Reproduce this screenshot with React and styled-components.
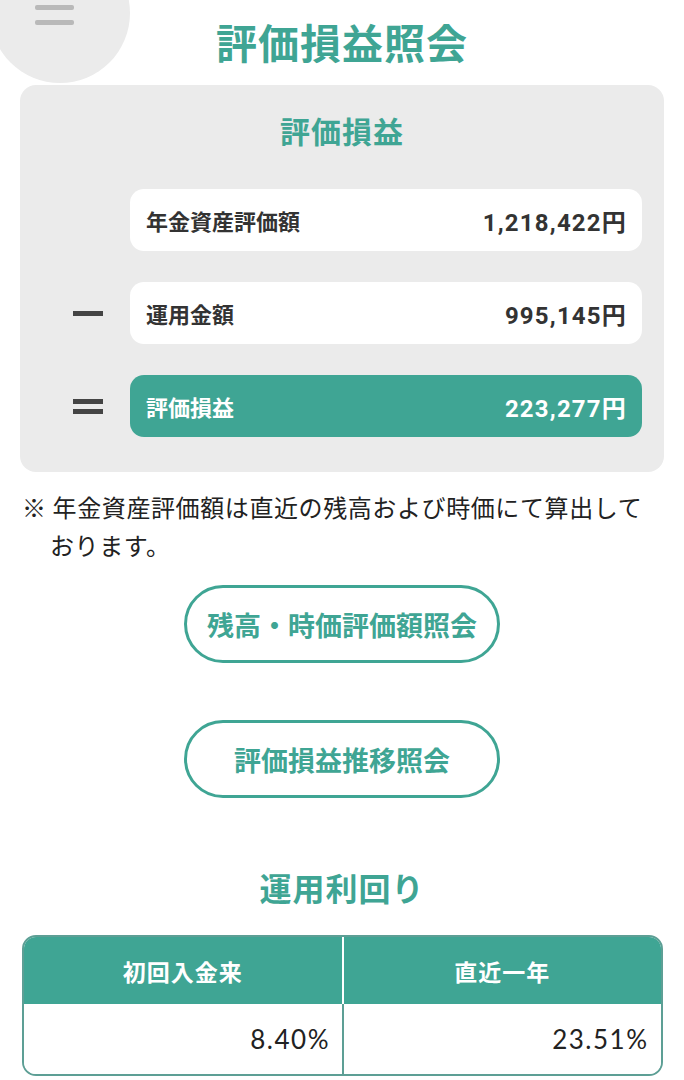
import React from 'react';
import styled, { createGlobalStyle } from 'styled-components';

const TEAL = '#3fa594';

const GlobalStyle = createGlobalStyle`
  html, body {
    margin: 0;
    padding: 0;
    background: #ffffff;
    font-family: "Noto Sans CJK JP", "Noto Sans", sans-serif;
  }
`;

const Page = styled.div`
  position: relative;
  width: 684px;
  height: 1080px;
  overflow: hidden;
  background: #fff;
`;

// Menu bubble in the top left corner
const MenuBubble = styled.div`
  position: absolute;
  left: -10px;
  top: -57px;
  width: 140px;
  height: 140px;
  border-radius: 50%;
  background: #ebebeb;
`;

const MenuLines = styled.div`
  position: absolute;
  left: 35px;
  top: 5px;
  display: flex;
  flex-direction: column;
  gap: 10px;
  span {
    display: block;
    width: 39px;
    height: 5px;
    border-radius: 2px;
    background: #b9b9b9;
  }
`;

const Content = styled.div`
  position: relative;
  display: flex;
  flex-direction: column;
  align-items: center;
  padding: 13px 20px 0;
`;

const Title = styled.h1`
  margin: 0;
  height: 72px;
  font-size: 41px;
  font-weight: 700;
  color: ${TEAL};
  letter-spacing: 1px;
  line-height: 56px;
`;

const Panel = styled.section`
  width: 644px;
  box-sizing: border-box;
  background: #ebebeb;
  border-radius: 16px;
  padding: 22px 22px 35px 0;
  display: flex;
  flex-direction: column;
`;

const PanelTitle = styled.h2`
  margin: 0 0 36px 22px;
  text-align: center;
  font-size: 30px;
  font-weight: 700;
  color: ${TEAL};
  line-height: 46px;
  letter-spacing: 1px;
`;

const Rows = styled.div`
  display: flex;
  flex-direction: column;
  gap: 31px;
`;

const RowLine = styled.div`
  display: flex;
  align-items: center;
`;

const OpSlot = styled.div`
  width: 110px;
  display: flex;
  justify-content: center;
  padding-left: 26px;
  box-sizing: border-box;
`;

const Minus = styled.div`
  width: 30px;
  height: 5px;
  background: #444;
`;

const Equals = styled.div`
  width: 30px;
  display: flex;
  flex-direction: column;
  gap: 5px;
  &::before, &::after {
    content: '';
    display: block;
    height: 5px;
    background: #444;
  }
`;

const ValueBox = styled.div`
  flex: 1;
  height: 62px;
  border-radius: 14px;
  background: ${(p) => (p.$highlight ? TEAL : '#fff')};
  color: ${(p) => (p.$highlight ? '#fff' : '#333')};
  display: flex;
  align-items: center;
  justify-content: space-between;
  padding: 0 15px 0 16px;
  font-size: 22px;
  font-weight: 700;
`;

const Amount = styled.span`
  font-family: Roboto, "Noto Sans CJK JP", sans-serif;
  font-size: 24px;
  font-weight: 700;
  letter-spacing: 1.2px;
`;

const Note = styled.p`
  align-self: flex-start;
  margin: 16px 0 0 2px;
  padding-left: 28px;
  text-indent: -28px;
  font-size: 24px;
  line-height: 38px;
  letter-spacing: 0.6px;
  color: #222;
  width: 625px;
  box-sizing: border-box;
`;

const PillButton = styled.button`
  margin-top: ${(p) => p.$top}px;
  width: 316px;
  height: 78px;
  border: 3px solid ${TEAL};
  border-radius: 40px;
  background: #fff;
  color: ${TEAL};
  font-family: "Noto Sans CJK JP", sans-serif;
  font-size: 27px;
  font-weight: 700;
  cursor: pointer;
`;

const SubTitle = styled.h2`
  margin: 66px 0 0;
  font-size: 32px;
  font-weight: 700;
  color: ${TEAL};
  line-height: 46px;
  letter-spacing: 1px;
`;

const YieldTable = styled.div`
  margin-top: 25px;
  width: 641px;
  box-sizing: border-box;
  border: 2px solid #5d9f95;
  border-radius: 14px;
  overflow: hidden;
  display: grid;
  grid-template-columns: 1fr 1fr;
`;

const HeadCell = styled.div`
  height: 67px;
  background: ${TEAL};
  color: #fff;
  display: flex;
  align-items: center;
  justify-content: center;
  font-size: 23px;
  font-weight: 700;
  letter-spacing: 1px;
  border-left: ${(p) => (p.$first ? 'none' : '2px solid #fff')};
`;

const BodyCell = styled.div`
  height: 70px;
  background: #fff;
  color: #222;
  display: flex;
  align-items: center;
  justify-content: flex-end;
  padding-right: 12px;
  font-family: Lato, "Noto Sans", sans-serif;
  font-size: 26px;
  font-weight: 400;
  letter-spacing: 1.5px;
  border-left: ${(p) => (p.$first ? 'none' : '2px solid #5d9f95')};
`;

const rows = [
  { op: null, label: '年金資産評価額', value: '1,218,422円' },
  { op: 'minus', label: '運用金額', value: '995,145円' },
  { op: 'equals', label: '評価損益', value: '223,277円', highlight: true },
];

export default function App() {
  return (
    <Page>
      <GlobalStyle />
      <MenuBubble />
      <MenuLines>
        <span />
        <span />
      </MenuLines>
      <Content>
        <Title>評価損益照会</Title>
        <Panel>
          <PanelTitle>評価損益</PanelTitle>
          <Rows>
            {rows.map((r) => (
              <RowLine key={r.label}>
                <OpSlot>
                  {r.op === 'minus' && <Minus />}
                  {r.op === 'equals' && <Equals />}
                </OpSlot>
                <ValueBox $highlight={r.highlight}>
                  <span>{r.label}</span>
                  <Amount>{r.value}</Amount>
                </ValueBox>
              </RowLine>
            ))}
          </Rows>
        </Panel>
        <Note>※ 年金資産評価額は直近の残高および時価にて算出しております。</Note>
        <PillButton $top={21}>残高・時価評価額照会</PillButton>
        <PillButton $top={57}>評価損益推移照会</PillButton>
        <SubTitle>運用利回り</SubTitle>
        <YieldTable>
          <HeadCell $first>初回入金来</HeadCell>
          <HeadCell>直近一年</HeadCell>
          <BodyCell $first>8.40%</BodyCell>
          <BodyCell>23.51%</BodyCell>
        </YieldTable>
      </Content>
    </Page>
  );
}
